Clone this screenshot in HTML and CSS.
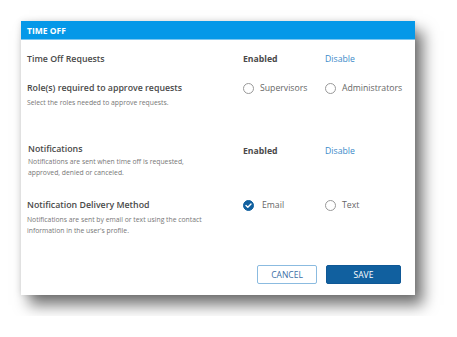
FILE: index.html
```html
<!DOCTYPE html>
<html lang="en">
<head>
    <meta charset="UTF-8">
    <meta name="viewport" content="width=device-width, initial-scale=1.0">
    <title>Time Off</title>
    <link rel="stylesheet" href="styles.css">
</head>
<body>
    <div class="panel">
        <div class="panel-header">TIME OFF</div>

        <div class="panel-body">
            <div class="row row-requests">
                <div class="label">
                    <div class="title">Time Off Requests</div>
                </div>
                <div class="value status">Enabled</div>
                <div class="value"><a class="link" href="#">Disable</a></div>
            </div>

            <div class="row row-roles">
                <div class="label">
                    <div class="title">Role(s) required to approve requests</div>
                    <div class="desc">Select the roles needed to approve requests.</div>
                </div>
                <div class="value">
                    <label class="radio"><span class="circle"></span>Supervisors</label>
                </div>
                <div class="value">
                    <label class="radio"><span class="circle"></span>Administrators</label>
                </div>
            </div>

            <div class="row row-notify">
                <div class="label">
                    <div class="title">Notifications</div>
                    <div class="desc">Notifications are sent when time off is requested,<br>approved, denied or canceled.</div>
                </div>
                <div class="value status shift">Enabled</div>
                <div class="value shift"><a class="link" href="#">Disable</a></div>
            </div>

            <div class="row row-method">
                <div class="label">
                    <div class="title">Notification Delivery Method</div>
                    <div class="desc">Notifications are sent by email or text using the contact<br>information in the user's profile.</div>
                </div>
                <div class="value">
                    <label class="radio">
                        <span class="circle checked">
                            <svg width="11" height="11" viewBox="0 0 11 11"><path d="M3 5.6 L4.8 7.3 L8 4" fill="none" stroke="#fff" stroke-width="1.4" stroke-linecap="round" stroke-linejoin="round"/></svg>
                        </span>Email
                    </label>
                </div>
                <div class="value">
                    <label class="radio"><span class="circle"></span>Text</label>
                </div>
            </div>

            <div class="actions">
                <button class="btn btn-cancel">CANCEL</button>
                <button class="btn btn-save">SAVE</button>
            </div>
        </div>
    </div>
</body>
</html>
```

FILE: styles.css
```css
body {
    margin: 0;
    padding: 21px;
    background-color: #fff;
    font-family: "Open Sans", Arial, sans-serif;
}

.panel {
    width: 394px;
    height: 274px;
    background: #fff;
    box-shadow: 8px 10px 14px rgba(0, 0, 0, 0.55), 0 0 6px rgba(0, 0, 0, 0.12);
    display: flex;
    flex-direction: column;
}

.panel-header {
    height: 19px;
    line-height: 19px;
    background-color: #0598e8;
    border-bottom: 1px solid #7cc6f0;
    box-sizing: border-box;
    color: #fff;
    font-size: 8.5px;
    font-weight: 700;
    padding-left: 6px;
}

.panel-body {
    padding: 13px 0 11px 6px;
    flex: 1;
    display: flex;
    flex-direction: column;
}

.row {
    display: grid;
    grid-template-columns: 216px 82px auto;
    align-items: start;
}

.row-roles {
    margin-top: 16px;
}

.row-notify {
    margin-top: 35px;
}

.row-method {
    margin-top: 21px;
}

.title {
    font-size: 8.8px;
    font-weight: 600;
    color: #4a4a4a;
    line-height: 13px;
}

.row-notify .title {
    padding-left: 1px;
}

.desc {
    font-size: 6.8px;
    color: #777;
    line-height: 11px;
    margin-top: 2px;
}

.row-notify .desc {
    margin-top: 0;
    padding-left: 1px;
}

.value {
    font-size: 8.7px;
    line-height: 13px;
    color: #4a4a4a;
}

.value.shift {
    padding-top: 2px;
}

.status {
    font-weight: 700;
}

.link {
    color: #3a8ac9;
    text-decoration: none;
}

.radio {
    display: flex;
    align-items: center;
    color: #666;
}

.circle {
    width: 11px;
    height: 11px;
    border: 1px solid #999;
    border-radius: 50%;
    box-sizing: border-box;
    margin-right: 6px;
    display: flex;
    align-items: center;
    justify-content: center;
}

.circle.checked {
    background-color: #11609f;
    border-color: #11609f;
    margin-right: 8px;
}

.circle.checked svg {
    flex-shrink: 0;
}

.actions {
    margin-top: auto;
    display: flex;
    justify-content: flex-start;
    padding-left: 230px;
    gap: 9px;
}

.btn {
    height: 19px;
    border-radius: 2px;
    font-family: "Open Sans", Arial, sans-serif;
    font-size: 8.5px;
    cursor: pointer;
    padding: 0;
}

.btn-cancel {
    width: 60px;
    background: #fff;
    border: 1px solid #8bbbe0;
    color: #3b6ea5;
}

.btn-save {
    width: 75px;
    background-color: #11609f;
    border: 1px solid #0f5896;
    color: #fff;
}
```
